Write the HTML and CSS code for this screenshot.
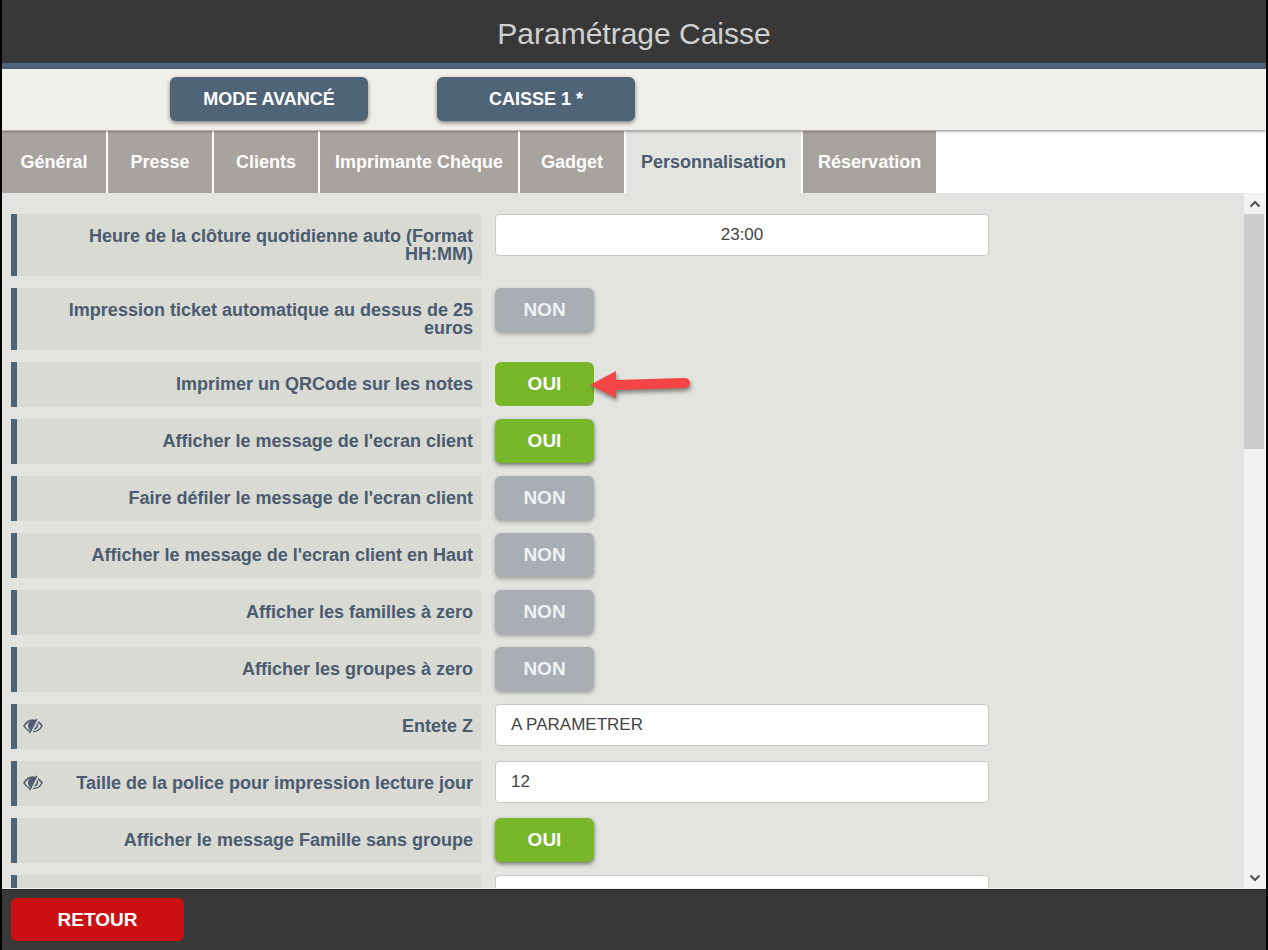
FILE: index.html
```html
<!DOCTYPE html>
<html lang="fr">
<head>
  <meta charset="UTF-8">
  <meta name="viewport" content="width=device-width, initial-scale=1">
  <title>Paramétrage Caisse</title>
  <link rel="stylesheet" href="styles.css">
</head>
<body>

  <header class="page-header">
    <h1>Paramétrage Caisse</h1>
  </header>

  <div class="toolbar">
    <button type="button" class="btn btn-primary">MODE AVANCÉ</button>
    <button type="button" class="btn btn-primary">CAISSE 1 *</button>
  </div>

  <nav class="tabs">
    <a href="#general">Général</a>
    <a href="#presse">Presse</a>
    <a href="#clients">Clients</a>
    <a href="#cheque">Imprimante Chèque</a>
    <a href="#gadget">Gadget</a>
    <a href="#personnalisation" class="active">Personnalisation</a>
    <a href="#reservation">Réservation</a>
  </nav>

  <!-- Icône "oeil barré" réutilisée dans les libellés -->
  <svg class="sprite" aria-hidden="true">
    <symbol id="eye-off" viewBox="0 0 20 16">
      <path d="M12.500 2.600C7.500 1 3.500 4 1 8c1.300 2.300 3 4 5.500 5.200" fill="none" stroke="currentColor" stroke-width="1.500"/>
      <path d="M15 3.700c1.500 1 2.800 2.500 4 4.300-2 3.500-5 5.600-9 5.600" fill="none" stroke="currentColor" stroke-width="1.500"/>
      <path d="M12.500 2.800C8.500 1.800 5 4.200 5 7.500c0 2 .8 3.700 2.200 4.800z" fill="currentColor"/>
      <path d="M13.800.8 6.600 15.200M14.500 5.500c.2 2.500-1 4.700-3 5.700" fill="none" stroke="currentColor" stroke-width="1.500"/>
    </symbol>
  </svg>

  <main class="content">
    <form class="settings">
      <div class="row">
        <label for="cloture"><span>Heure de la clôture quotidienne auto (Format HH:MM)</span></label>
        <input type="text" id="cloture" class="center" value="23:00">
      </div>
      <div class="row">
        <label for="ticket"><span>Impression ticket automatique au dessus de 25 euros</span></label>
        <button type="button" id="ticket" class="btn toggle">NON</button>
      </div>
      <div class="row">
        <label for="qrcode"><span>Imprimer un QRCode sur les notes</span></label>
        <div class="field">
          <button type="button" id="qrcode" class="btn toggle on pressed">OUI</button>
          <!-- Flèche posée par-dessus le bouton -->
          <svg class="arrow" viewBox="0 0 104 36" aria-hidden="true">
            <path d="M1 18 27 4v9l69-2a5 5 0 0 1 0 10L27 23v8z" fill="#f34543"/>
          </svg>
        </div>
      </div>
      <div class="row">
        <label for="ecran"><span>Afficher le message de l'ecran client</span></label>
        <button type="button" id="ecran" class="btn toggle on">OUI</button>
      </div>
      <div class="row">
        <label for="defiler"><span>Faire défiler le message de l'ecran client</span></label>
        <button type="button" id="defiler" class="btn toggle">NON</button>
      </div>
      <div class="row">
        <label for="haut"><span>Afficher le message de l'ecran client en Haut</span></label>
        <button type="button" id="haut" class="btn toggle">NON</button>
      </div>
      <div class="row">
        <label for="familles"><span>Afficher les familles à zero</span></label>
        <button type="button" id="familles" class="btn toggle">NON</button>
      </div>
      <div class="row">
        <label for="groupes"><span>Afficher les groupes à zero</span></label>
        <button type="button" id="groupes" class="btn toggle">NON</button>
      </div>
      <div class="row">
        <label for="entete"><svg class="eye"><use href="#eye-off"/></svg><span>Entete Z</span></label>
        <input type="text" id="entete" value="A PARAMETRER">
      </div>
      <div class="row">
        <label for="police"><svg class="eye"><use href="#eye-off"/></svg><span>Taille de la police pour impression lecture jour</span></label>
        <input type="text" id="police" value="12">
      </div>
      <div class="row">
        <label for="sansgroupe"><span>Afficher le message Famille sans groupe</span></label>
        <button type="button" id="sansgroupe" class="btn toggle on">OUI</button>
      </div>
      <div class="row">
        <label for="suite"></label>
        <input type="text" id="suite">
      </div>
    </form>

    <div class="scrollbar">
      <button type="button" aria-label="Monter">
        <svg viewBox="0 0 12 8"><path d="M1.500 6.500 6 2l4.500 4.500"/></svg>
      </button>
      <div class="track"><div class="thumb"></div></div>
      <button type="button" aria-label="Descendre">
        <svg viewBox="0 0 12 8"><path d="M1.500 1.500 6 6l4.500-4.500"/></svg>
      </button>
    </div>
  </main>

  <footer class="page-footer">
    <button type="button" class="btn btn-back">RETOUR</button>
  </footer>

</body>
</html>
```
FILE: styles.css
```css
:root {
  --dark: #383838;
  --blue: #506477;
  --text: #4b5b70;
  --page: #e3e4df;
  --label: #d8dad3;
  --tab: #a7a39e;
  --green: #78b729;
  --grey: #a8aeb4;
  --red: #cb0f13;
}

* {
  box-sizing: border-box;
}

body {
  margin: 0;
  height: 100vh;
  display: flex;
  flex-direction: column;
  border: solid #000;
  border-width: 0 2px;
  background: #fff;
  color: var(--text);
  font-family: "Liberation Sans", Arial, sans-serif;
  font-size: 18px;
  overflow: hidden;
}

.sprite {
  display: none;
}

/* En-tête */
.page-header {
  padding: 17px 0 12px;
  background: var(--dark);
  border-bottom: 6px solid var(--blue);
  text-align: center;
}

.page-header h1 {
  margin: 0;
  color: #d0d0d0;
  font-size: 30px;
  font-weight: 400;
  line-height: 34px;
}

/* Boutons */
.btn {
  height: 44px;
  border: 0;
  border-radius: 6px;
  color: #fff;
  font-family: inherit;
  font-size: 18px;
  font-weight: 700;
  cursor: pointer;
  box-shadow: 0 2px 4px rgba(0, 0, 0, 0.45);
}

.btn-primary {
  width: 198px;
  background: var(--blue);
}

.toolbar {
  display: flex;
  gap: 69px;
  padding: 8px 168px 9px;
  background: #f0efea;
  box-shadow: 0 1px 3px rgba(0, 0, 0, 0.5);
  position: relative;
}

/* Onglets */
.tabs {
  display: flex;
  gap: 2px;
  padding-top: 1px;
}

.tabs a {
  min-width: 104px;
  padding: 0 15px;
  background: var(--tab);
  color: #fff;
  font-weight: 700;
  line-height: 62px;
  text-align: center;
  text-decoration: none;
}

.tabs a.active {
  background: var(--page);
  color: var(--text);
}

/* Liste des paramètres */
.content {
  flex: 1;
  min-height: 0;
  display: flex;
  background: var(--page);
  border-bottom: 1px solid #f4f4f2;
}

.settings {
  flex: 1;
  display: flex;
  flex-direction: column;
  gap: 12px;
  padding: 21px 0 0 9px;
  overflow: hidden;
}

.row {
  flex: none;
  display: grid;
  grid-template-columns: 470fr 494fr 241fr;
  gap: 14px;
  align-items: start;
}

.row label {
  display: flex;
  align-items: flex-start;
  gap: 12px;
  min-height: 45px;
  padding: 13px 8px 13px 6px;
  border-left: 6px solid var(--blue);
  background: var(--label);
  font-weight: 700;
  line-height: 18px;
}

.row label span {
  flex: 1;
  text-align: right;
}

.eye {
  flex: none;
  width: 20px;
  height: 18px;
}

.row input {
  width: 100%;
  height: 42px;
  padding: 0 15px;
  border: 1px solid #c8c9c6;
  border-radius: 4px;
  background: #fff;
  color: #444;
  font-family: inherit;
  font-size: 17px;
}

.row input.center {
  text-align: center;
}

.toggle {
  width: 99px;
  background: var(--grey);
  color: #f0f1f3;
  font-size: 19px;
  box-shadow: 0 2px 4px rgba(0, 0, 0, 0.3);
}

.toggle.on {
  background: var(--green);
  color: #fff;
  box-shadow: 0 2px 4px rgba(0, 0, 0, 0.5);
}

.toggle.pressed {
  box-shadow: none;
}

.field {
  position: relative;
}

.arrow {
  position: absolute;
  top: 5px;
  left: 94px;
  width: 104px;
  height: 36px;
  filter: drop-shadow(1px 3px 2px rgba(0, 0, 0, 0.45));
}

/* Barre de défilement */
.scrollbar {
  width: 22px;
  display: flex;
  flex-direction: column;
  background: #f2f2f0;
}

.scrollbar button {
  height: 21px;
  padding: 0;
  border: 0;
  background: none;
  line-height: 0;
}

.scrollbar svg {
  width: 12px;
  height: 8px;
  fill: none;
  stroke: #505050;
  stroke-width: 2;
}

.track {
  flex: 1;
}

.thumb {
  height: 36%;
  margin-right: 2px;
  background: #cdcdcd;
}

/* Pied de page */
.page-footer {
  padding: 8px 9px 9px;
  background: var(--dark);
  border-top: 1px solid #222;
}

.btn-back {
  width: 173px;
  height: 43px;
  display: block;
  background: var(--red);
  font-size: 19px;
  box-shadow: none;
}
```
